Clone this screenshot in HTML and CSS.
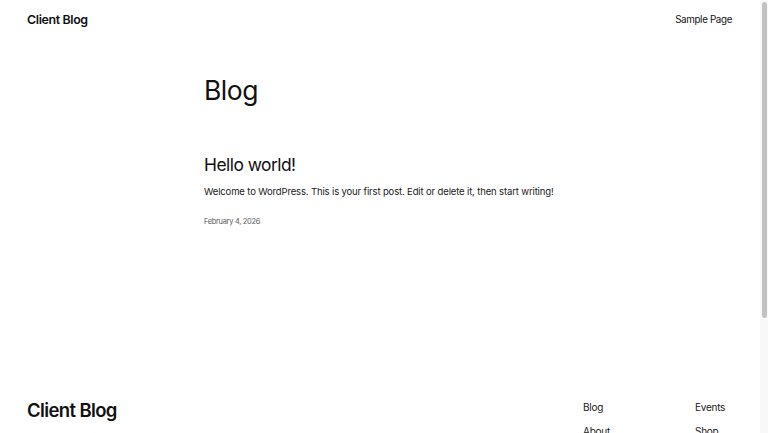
FILE: index.html
```html
<!DOCTYPE html>
<html lang="en">
<head>
<meta charset="utf-8">
<title>Client Blog</title>
<link rel="stylesheet" href="styles.css">
</head>
<body>
<div class="page">
  <header class="site-header">
    <a class="site-title" href="#">Client Blog</a>
    <nav class="top-nav"><a href="#">Sample Page</a></nav>
  </header>
  <main class="main">
    <h1 class="page-title">Blog</h1>
    <article class="post">
      <h2 class="post-title">Hello world!</h2>
      <p class="post-excerpt">Welcome to WordPress. This is your first post. Edit or delete it, then start writing!</p>
      <p class="post-date">February 4, 2026</p>
    </article>
  </main>
  <footer class="site-footer">
    <div class="footer-top">
      <a class="footer-title" href="#">Client Blog</a>
      <div class="footer-navs">
        <ul class="footer-col">
          <li><a href="#">Blog</a></li>
          <li><a href="#">About</a></li>
          <li><a href="#">FAQs</a></li>
          <li><a href="#">Authors</a></li>
        </ul>
        <ul class="footer-col">
          <li><a href="#">Events</a></li>
          <li><a href="#">Shop</a></li>
          <li><a href="#">Patterns</a></li>
          <li><a href="#">Themes</a></li>
        </ul>
      </div>
    </div>
    <div class="footer-bottom">
      <span>Twenty Twenty-Five</span>
      <span>Designed with WordPress</span>
    </div>
  </footer>
</div>
<div class="scrollbar" aria-hidden="true"><div class="scrollbar-thumb"></div></div>
</body>
</html>
```
FILE: styles.css
```css
html, body {
  margin: 0;
  padding: 0;
  background: #fff;
}
body {
  font-family: "Inter", "Noto Sans", sans-serif;
  color: #111;
}
a {
  color: inherit;
  text-decoration: none;
}
.page {
  width: 760px;
}
.site-header {
  display: flex;
  justify-content: space-between;
  align-items: center;
  height: 38px;
  padding: 0 28px 0 27px;
}
.site-title {
  font-size: 12.4px;
  font-weight: 600;
  letter-spacing: -0.36px;
}
.top-nav {
  font-size: 9.8px;
  letter-spacing: -0.35px;
}
.main {
  width: 352px;
  margin: 0 auto;
  padding-top: 37.4px;
  height: 324.6px;
}
.page-title {
  margin: 0;
  font-size: 26.5px;
  font-weight: 400;
  line-height: 31.8px;
  letter-spacing: -0.5px;
}
.post {
  margin-top: 47.7px;
}
.post-title {
  margin: 0;
  font-size: 17.4px;
  font-weight: 400;
  line-height: 20.9px;
  letter-spacing: -0.52px;
}
.post-excerpt {
  margin: 9.6px 0 0;
  font-size: 9.5px;
  line-height: 14.25px;
  letter-spacing: -0.14px;
  white-space: nowrap;
  color: #1a1a1a;
}
.post-date {
  margin: 17.5px 0 0;
  font-size: 7.4px;
  line-height: 9px;
  color: #5a5a5a;
  letter-spacing: -0.27px;
}
.site-footer {
  padding: 0 28px 40px 27px;
}
.footer-top {
  display: flex;
  justify-content: space-between;
  align-items: flex-start;
}
.footer-title {
  font-size: 18.5px;
  font-weight: 600;
  line-height: 22.2px;
  letter-spacing: -0.62px;
  margin-top: -0.8px;
}
.footer-navs {
  display: flex;
}
.footer-col {
  list-style: none;
  margin: 0;
  padding: 0;
  width: 112px;
  font-size: 10px;
  letter-spacing: -0.25px;
  color: #1a1a1a;
}
.footer-col:last-child {
  width: 37px;
}
.footer-col li {
  height: 24.5px;
  line-height: 14px;
  white-space: nowrap;
}
.footer-bottom {
  display: flex;
  justify-content: space-between;
  margin-top: 36px;
  font-size: 9px;
}
.scrollbar {
  position: fixed;
  top: 0;
  right: 0;
  width: 8px;
  height: 100%;
  background: #f8f8f8;
}
.scrollbar-thumb {
  margin: 2px 0 0 2px;
  width: 5px;
  height: 316px;
  border-radius: 3px;
  background: #c2c2c2;
}
```
